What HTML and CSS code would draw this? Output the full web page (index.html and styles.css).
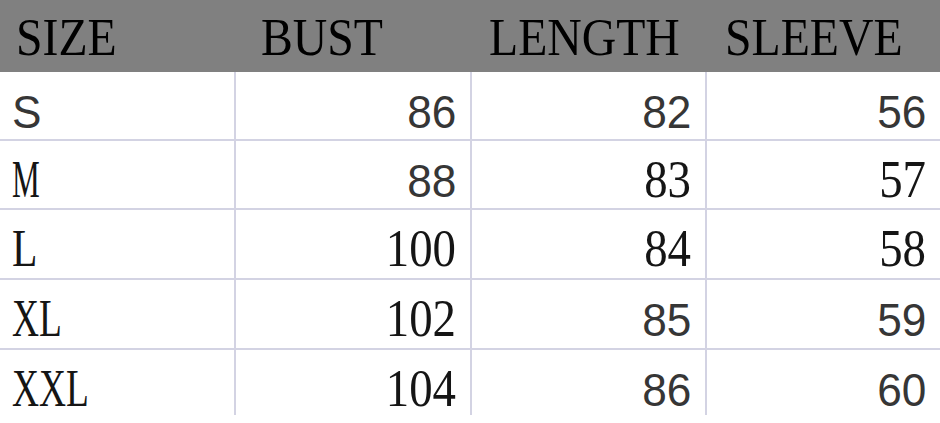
FILE: index.html
```html
<!DOCTYPE html>
<html>
<head>
<meta charset="utf-8">
<link rel="stylesheet" href="styles.css">
</head>
<body>
<div class="chart">
  <div class="row head">
    <div class="cell h1"><span class="hl">SIZE</span></div>
    <div class="cell h2"><span class="hl">BUST</span></div>
    <div class="cell h3"><span class="hl">LENGTH</span></div>
    <div class="cell h4"><span class="hl">SLEEVE</span></div>
  </div>
  <div class="row r69">
    <div class="cell sz"><span class="sans">S</span></div>
    <div class="cell num"><span class="sans">86</span></div>
    <div class="cell num"><span class="sans">82</span></div>
    <div class="cell num last"><span class="sans">56</span></div>
  </div>
  <div class="row r69">
    <div class="cell sz"><span class="ser n-m">M</span></div>
    <div class="cell num"><span class="sans">88</span></div>
    <div class="cell num"><span class="ser">83</span></div>
    <div class="cell num last"><span class="ser">57</span></div>
  </div>
  <div class="row r70">
    <div class="cell sz"><span class="ser n-l">L</span></div>
    <div class="cell num"><span class="ser">100</span></div>
    <div class="cell num"><span class="ser">84</span></div>
    <div class="cell num last"><span class="ser">58</span></div>
  </div>
  <div class="row r70">
    <div class="cell sz"><span class="ser n-x">XL</span></div>
    <div class="cell num"><span class="ser">102</span></div>
    <div class="cell num"><span class="sans">85</span></div>
    <div class="cell num last"><span class="sans">59</span></div>
  </div>
  <div class="row r65 end">
    <div class="cell sz"><span class="ser n-x">XXL</span></div>
    <div class="cell num"><span class="ser">104</span></div>
    <div class="cell num"><span class="sans">86</span></div>
    <div class="cell num last"><span class="sans">60</span></div>
  </div>
</div>
</body>
</html>
```

FILE: styles.css
```css
html, body {
  margin: 0;
  padding: 0;
  background: #ffffff;
}

.chart {
  width: 940px;
  display: flex;
  flex-direction: column;
}

.row {
  display: grid;
  grid-template-columns: 236px 236px 235px 1fr;
  border-bottom: 2px solid #d3d3e3;
  box-sizing: border-box;
}

.row.head {
  height: 72px;
  background: #808080;
  border-bottom: none;
}

.r69 { height: 69px; }
.r70 { height: 70px; }
.r65 { height: 65px; }
.row.end { border-bottom: none; }

.cell {
  box-sizing: border-box;
  font-family: "Liberation Sans", Arial, sans-serif;
  font-size: 47px;
  line-height: 60px;
  padding-top: 10px;
  border-right: 2px solid #d3d3e3;
  white-space: nowrap;
  overflow: visible;
}

.cell.last { border-right: none; }

.head .cell {
  border-right: none;
  font-family: "Liberation Serif", "Times New Roman", serif;
  font-size: 53px;
  line-height: 72px;
  padding-top: 1px;
  color: #000000;
}

.h1 { padding-left: 16px; }
.h2 { padding-left: 25px; }
.h3 { padding-left: 17px; }
.h4 { padding-left: 18px; }

.hl {
  display: inline-block;
  line-height: 0;
  transform: scaleX(0.9);
  transform-origin: left center;
}

.sz {
  padding-left: 12px;
  text-align: left;
}

.num {
  padding-right: 14px;
  text-align: right;
}

.sans {
  display: inline-block;
  line-height: 0;
  font-family: "Liberation Sans", Arial, sans-serif;
  font-size: 47px;
  color: #363636;
  transform: scaleX(0.94);
  transform-origin: right center;
}

.sz .sans { transform-origin: left center; }

.ser {
  display: inline-block;
  line-height: 0;
  font-family: "Liberation Serif", "Times New Roman", serif;
  font-size: 52px;
  color: #151515;
  transform: scaleX(0.9);
  transform-origin: right center;
}

.sz .ser { transform-origin: left center; }
.sz .n-m { transform: scaleX(0.6); }
.sz .n-l { transform: scaleX(0.8); }
.sz .n-x { transform: scaleX(0.72); }
```
